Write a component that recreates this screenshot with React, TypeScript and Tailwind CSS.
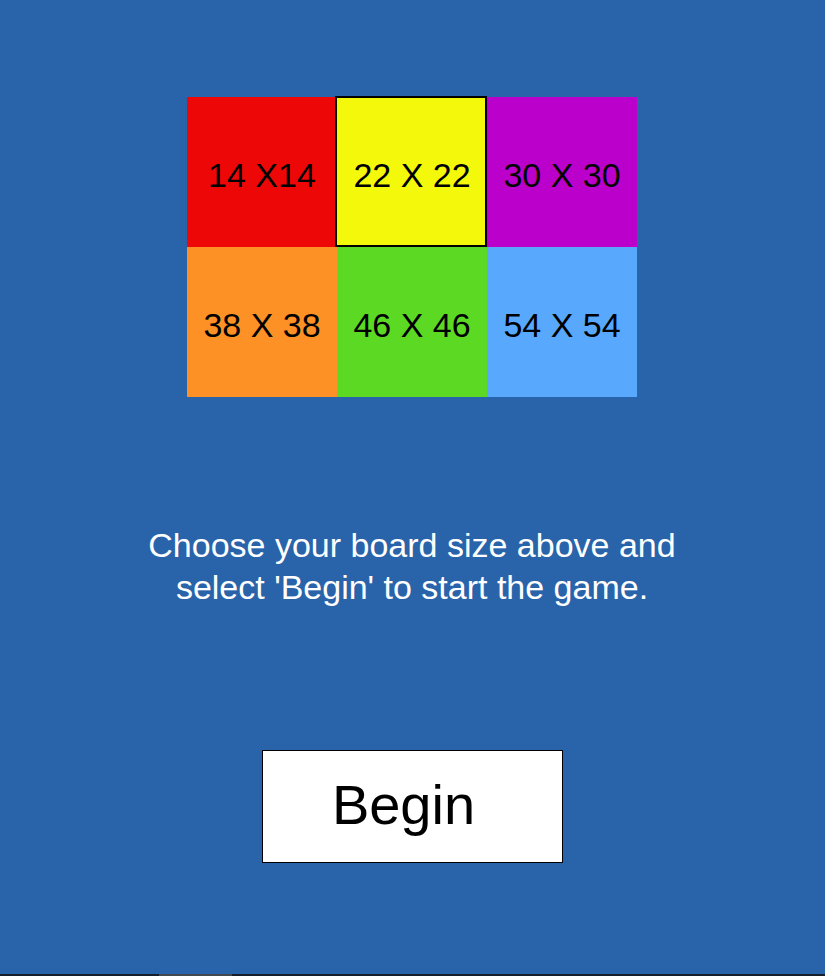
import React from "react";

const cells = [
  { label: "14 X14", bg: "bg-[#ee0707]", selected: false },
  { label: "22 X 22", bg: "bg-[#f4f80a]", selected: true },
  { label: "30 X 30", bg: "bg-[#bb00cc]", selected: false },
  { label: "38 X 38", bg: "bg-[#fd9126]", selected: false },
  { label: "46 X 46", bg: "bg-[#5cd923]", selected: false },
  { label: "54 X 54", bg: "bg-[#58a8fd]", selected: false },
];

export default function App() {
  return (
    <div
      className="flex h-[976px] w-full flex-col bg-[#2964aa]"
      style={{ fontFamily: '"Liberation Sans", Arial, sans-serif' }}
    >
      <div className="flex flex-1 flex-col items-center pt-[97px]">
        <div className="mr-[1px] grid w-[450px] grid-cols-3">
          {cells.map((c) => (
            <div
              key={c.label}
              className={`relative flex h-[150px] items-center justify-center pt-[7px] text-[34px] text-black ${c.bg}`}
            >
              {c.selected && (
                <div className="absolute -left-[2px] -top-[1px] right-0 bottom-0 border-2 border-black" />
              )}
              <span className="relative">{c.label}</span>
            </div>
          ))}
        </div>
        <p className="mt-[127px] mr-[1px] w-[580px] text-center text-[34px] leading-[42px] text-white">
          Choose your board size above and select 'Begin' to start the game.
        </p>
        <button className="mt-[142px] mr-[1px] flex h-[113px] w-[301px] items-center justify-center border border-black bg-white pr-[17px] pb-[3px] text-[56px] text-black">
          Begin
        </button>
      </div>
      <div className="relative h-[2px] w-full bg-[#17202a]">
        <div className="absolute left-[159px] top-0 h-[2px] w-[73px] bg-[#44494f]" />
      </div>
    </div>
  );
}
